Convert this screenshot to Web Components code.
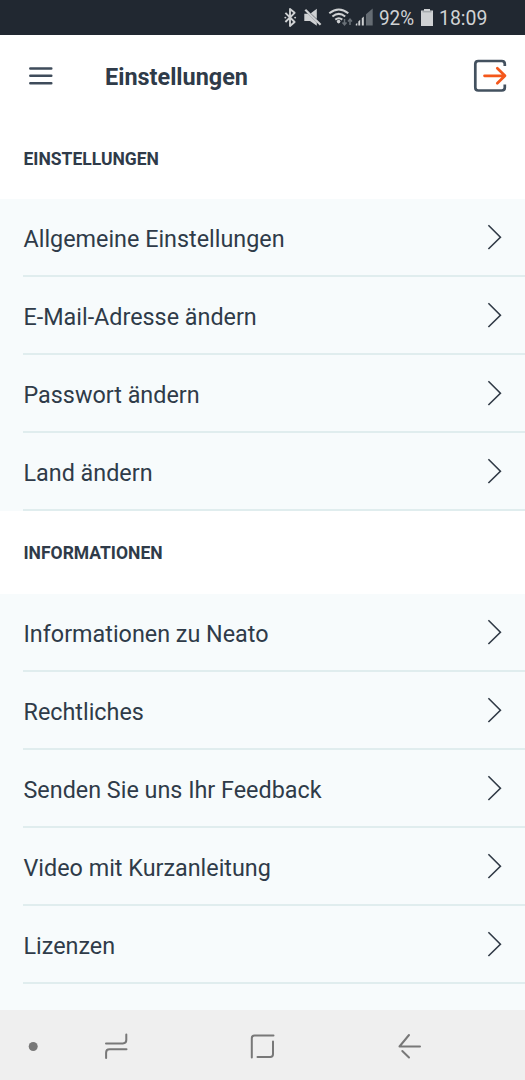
<!DOCTYPE html>
<html lang="de">
<head>
<meta charset="utf-8">
<title>Einstellungen</title>
<style>
html,body{margin:0;height:100%;background:#fff}
body{font-family:Roboto,"Liberation Sans",sans-serif;color:#2f3b49;overflow:hidden}
</style>
</head>
<body>
<settings-app></settings-app>
<script>
const define = (name, html) => customElements.define(name, class extends HTMLElement {
  constructor() {
    super();
    this.attachShadow({ mode: 'open' }).innerHTML = html;
  }
});

define('status-bar', `
<style>
:host{display:flex;height:35px;flex:none;background:#212831;color:#d0d2d4;padding-left:282px;align-items:center}
svg{display:block;flex:none}
.t{font-size:21px;line-height:35px;white-space:nowrap;transform-origin:0 50%;padding-top:2px}
.pct{width:41px;margin-left:2px;transform:scaleX(.9)}
.clock{margin-left:5px;transform:scaleX(.925)}
</style>
<svg width="95" height="35" viewBox="282 0 95 35" fill="none">
  <path d="M285.400 12.800 294.600 22 290 26V9L294.600 12.800 285.400 22" stroke="#cfd1d3" stroke-width="1.900" stroke-linejoin="round"/>
  <path d="M285.300 17.600h.1M295.100 17.600h.1" stroke="#cfd1d3" stroke-width="1.900" stroke-linecap="round"/>
  <path d="M304.300 13.800H308L316.800 22.500V25.800L310 21H304.300zM310.800 13.200 316.800 8.800v10.300z" fill="#cfd1d3"/>
  <path d="M305.300 9.800 320.600 24.800" stroke="#cfd1d3" stroke-width="2.200"/>
  <path d="M329.300 13.300Q338.800 5.600 348.300 13.300M332.400 16.500Q338.800 11.200 345.200 16.500M335.300 19.600Q338.800 16.800 342.300 19.600" stroke="#cfd1d3" stroke-width="2"/>
  <circle cx="338.600" cy="21.600" r="1.800" fill="#cfd1d3"/>
  <path d="M344.500 19v6M342.500 22.600l2 2.200 2-2.200M350 25v-6M348 21.400l2-2.200 2 2.200" stroke="#6a7178" stroke-width="1.500"/>
  <path d="M355.800 25.500v-1.500l1.500-1v2.500zM358.300 25.500v-4l1.900-1.700v5.700zM361.800 25.500v-7.200l2-1.800v9z" fill="#cfd1d3"/>
  <path d="M366 25.500V14.200l6.700-5.700v17z" fill="#656c73"/>
</svg>
<span class="t pct">92%</span>
<svg width="14" height="35" viewBox="420 0 14 35"><path d="M421 10.500h3V9h6v1.500h3V26h-12z" fill="#cfd1d3"/><path d="M422.500 11.800h9" stroke="#858a8f" stroke-width=".8"/></svg>
<span class="t clock">18:09</span>
`);

define('app-header', `
<style>
:host{display:flex;height:81px;flex:none;align-items:center;background:#fff;padding:0 17px 0 28px}
svg{display:block;flex:none}
h1{flex:1;margin:0 0 0 52px;font-size:23.450px;line-height:30px;font-weight:700;padding-top:3px}
</style>
<svg width="25" height="22" viewBox="28 65 25 22"><path d="M30.300 68.400h21M30.300 75.800h21M30.300 83.200h21" stroke="#3f4c5b" stroke-width="2.500" stroke-linecap="round"/></svg>
<h1><slot></slot></h1>
<svg width="35" height="34" viewBox="473 59 35 34" fill="none" stroke-linecap="round" stroke-linejoin="round" stroke-width="2.700">
  <path d="M504.800 66v-2q0-3-3-3h-23.500q-3 0-3 3v23.500q0 3 3 3h23.500q3 0 3-3V84.500" stroke="#43515f" stroke-linecap="butt"/>
  <path d="M484.500 75.800h20.500M497.300 68.300 505 75.800l-7.700 7.500" stroke="#f4571b"/>
</svg>
`);

define('settings-section', `
<style>
:host{display:block;background:#f7fbfc}
h2{margin:0;height:83px;box-sizing:border-box;padding:0 23.500px;background:#fff;font-size:17.500px;font-weight:700;line-height:var(--heading-line,85px)}
</style>
<h2></h2>
<slot></slot>
`);
customElements.whenDefined('settings-section').then(() => {
  document.querySelector('settings-app').shadowRoot.querySelectorAll('settings-section').forEach(s => {
    s.shadowRoot.querySelector('h2').textContent = s.getAttribute('heading');
  });
});

define('settings-row', `
<style>
:host{display:flex;height:78px;box-sizing:border-box;margin-left:23px;padding-right:23px;border-bottom:2px solid #e0edee;align-items:center;justify-content:space-between}
span{font-size:23.350px;line-height:30px;padding:4px 0 0 .5px;white-space:nowrap}
svg{display:block;flex:none}
</style>
<span><slot></slot></span>
<svg width="15" height="26" viewBox="0 0 15 26"><path d="M1.400 1.300 13.400 13.200 1.400 25" fill="none" stroke="#303a46" stroke-width="1.600"/></svg>
`);

define('nav-bar', `
<style>
:host{display:block;height:70px;flex:none;background:#efefef}
svg{display:block}
</style>
<svg width="525" height="70" viewBox="0 1010 525 70" fill="none" stroke="#787878" stroke-width="2" stroke-linecap="round" stroke-linejoin="round">
  <circle cx="33.200" cy="1046.500" r="4.500" fill="#787878" stroke="none"/>
  <path d="M126.300 1034.500v5.500q0 3.400-3.400 3.400H106M126.500 1049.300H109.500q-3.400 0-3.400 3.400v5.300"/>
  <path d="M273.500 1035.500H254.500q-2.700 0-2.700 2.700V1057.500M257.500 1057h12.800q2.700 0 2.700-2.700V1041.500"/>
  <path d="M420 1046.500H399.500L409 1035M402.300 1051 409 1057.500"/>
</svg>
`);

define('settings-app', `
<style>
:host{display:flex;flex-direction:column;width:525px;height:1080px;overflow:hidden}
main{flex:1;min-height:0;background:#f7fbfc;overflow:hidden}
</style>
<status-bar></status-bar>
<app-header>Einstellungen</app-header>
<main>
  <settings-section heading="EINSTELLUNGEN" style="--heading-line:87px">
    <settings-row>Allgemeine Einstellungen</settings-row>
    <settings-row>E-Mail-Adresse ändern</settings-row>
    <settings-row>Passwort ändern</settings-row>
    <settings-row>Land ändern</settings-row>
  </settings-section>
  <settings-section heading="INFORMATIONEN">
    <settings-row>Informationen zu Neato</settings-row>
    <settings-row>Rechtliches</settings-row>
    <settings-row>Senden Sie uns Ihr Feedback</settings-row>
    <settings-row>Video mit Kurzanleitung</settings-row>
    <settings-row>Lizenzen</settings-row>
  </settings-section>
</main>
<nav-bar></nav-bar>
`);
</script>
</body>
</html>
